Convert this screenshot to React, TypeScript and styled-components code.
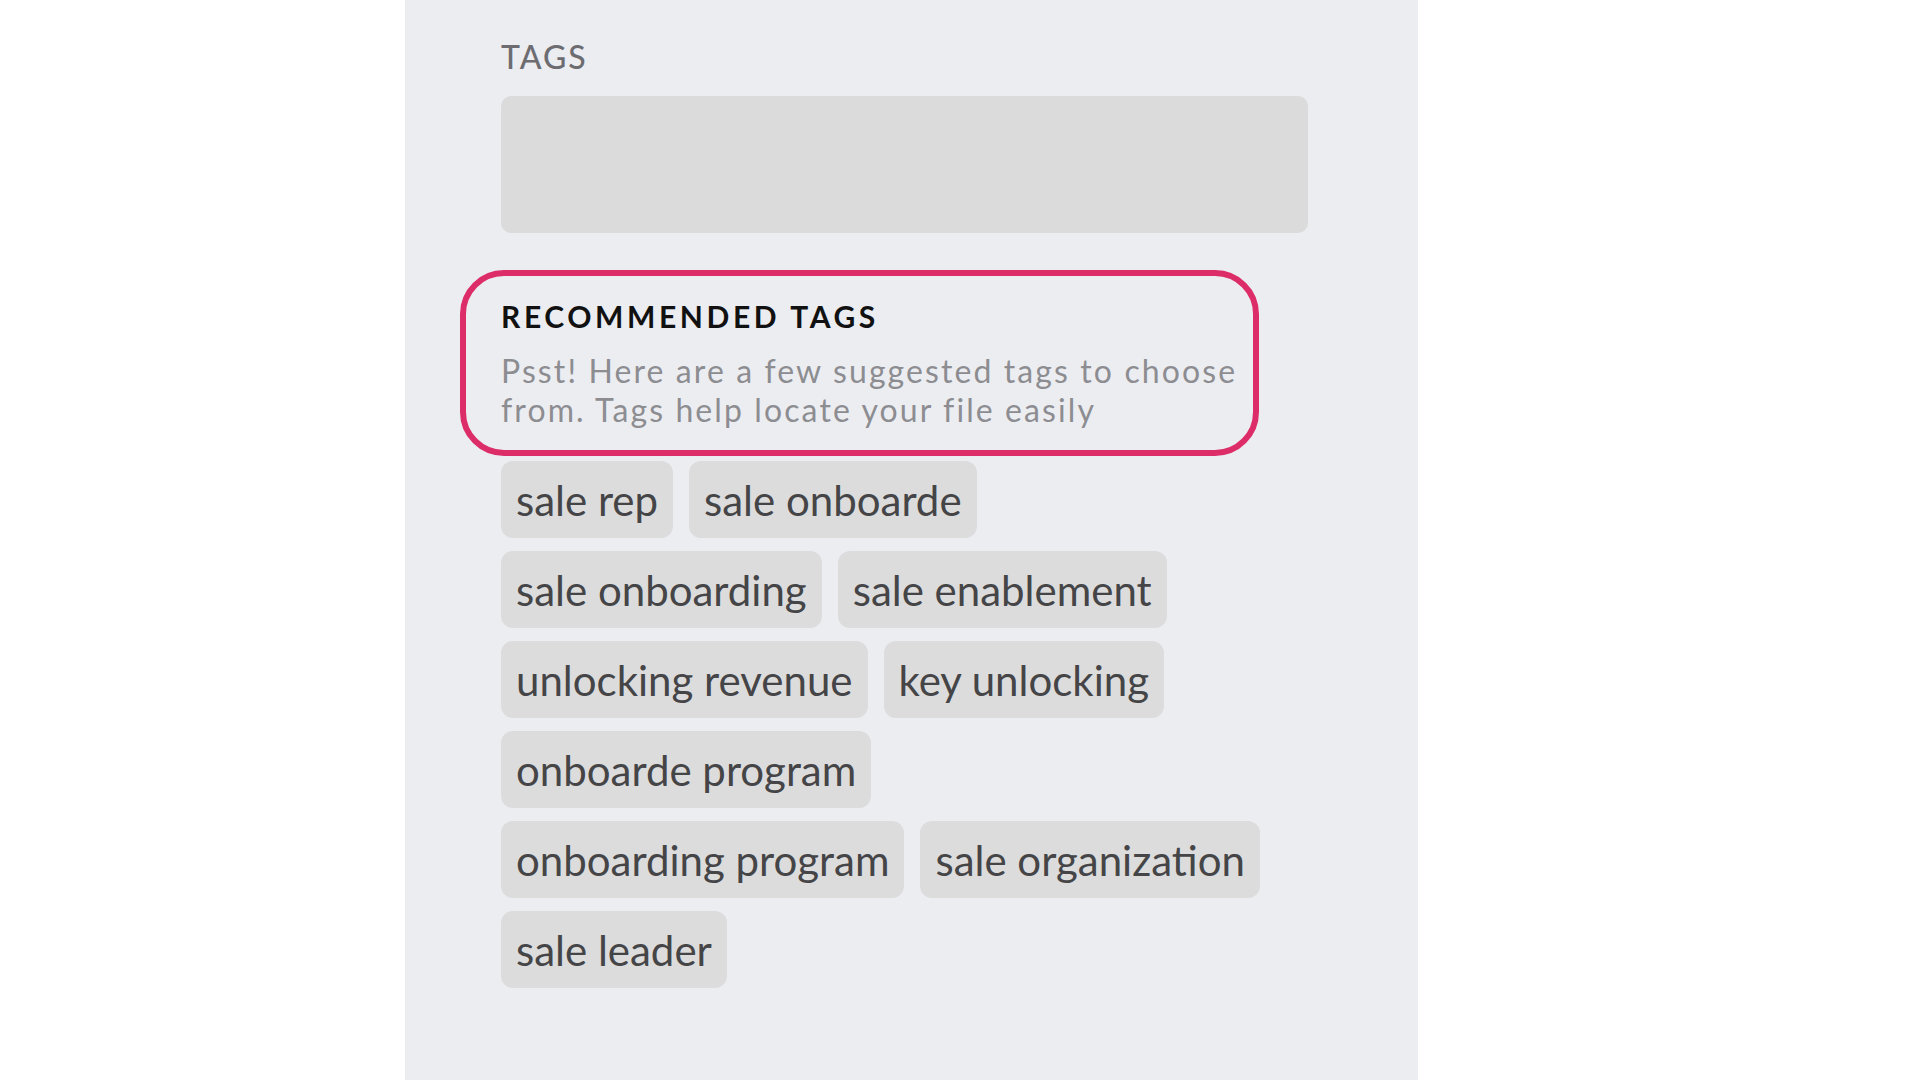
import React from "react";
import styled, { createGlobalStyle } from "styled-components";

const tags = [
	"sale rep",
	"sale onboarde",
	"sale onboarding",
	"sale enablement",
	"unlocking revenue",
	"key unlocking",
	"onboarde program",
	"onboarding program",
	"sale organization",
	"sale leader",
];

const App = () => {
	return (
		<>
			<GlobalStyle />
			<Page>
				<Panel>
					<Label>TAGS</Label>
					<TagInput />
					<Recommended>
						<Highlight />
						<h3>RECOMMENDED TAGS</h3>
						<p>
							Psst! Here are a few suggested tags to choose
							<br />
							from. Tags help locate your file easily
						</p>
					</Recommended>
					<ChipList>
						{tags.map((tag) => (
							<Chip key={tag}>{tag}</Chip>
						))}
					</ChipList>
				</Panel>
			</Page>
		</>
	);
};

export default App;

const GlobalStyle = createGlobalStyle`
	* {
		box-sizing: border-box;
	}
	body {
		margin: 0;
		background: #ffffff;
		font-family: Lato, "Open Sans", sans-serif;
	}
`;
const Page = styled.div`
	display: flex;
	min-height: 1080px;
	padding-left: 405px;
`;
const Panel = styled.div`
	width: 1013px;
	min-height: 1080px;
	background: #ecedf1;
	padding: 38px 110px 0 96px;
	display: flex;
	flex-direction: column;
`;
const Label = styled.div`
	font-size: 32px;
	line-height: 38px;
	font-weight: 500;
	letter-spacing: 2px;
	color: #6c6c71;
`;
const TagInput = styled.div`
	margin-top: 20px;
	height: 137px;
	width: 807px;
	border-radius: 10px;
	background: #dbdbdc;
`;
const Recommended = styled.div`
	position: relative;
	margin-top: 66px;
	h3 {
		margin: 0;
		font-size: 30px;
		line-height: 34px;
		font-weight: 700;
		letter-spacing: 3.6px;
		color: #111111;
	}
	p {
		margin: 18px 0 0;
		font-size: 32px;
		line-height: 39px;
		letter-spacing: 2.1px;
		color: #8d8d91;
		white-space: nowrap;
	}
`;
const Highlight = styled.div`
	position: absolute;
	left: -41px;
	top: -29px;
	width: 799px;
	height: 186px;
	border: 6px solid #dc2d68;
	border-radius: 44px;
	pointer-events: none;
`;
const ChipList = styled.div`
	display: flex;
	flex-wrap: wrap;
	gap: 13px 16px;
	margin-top: 32px;
	width: 780px;
`;
const Chip = styled.span`
	display: inline-flex;
	align-items: center;
	height: 77px;
	padding: 0 15px;
	border-radius: 12px;
	background: #dcdcdd;
	color: #454547;
	font-size: 42px;
	white-space: nowrap;
`;
